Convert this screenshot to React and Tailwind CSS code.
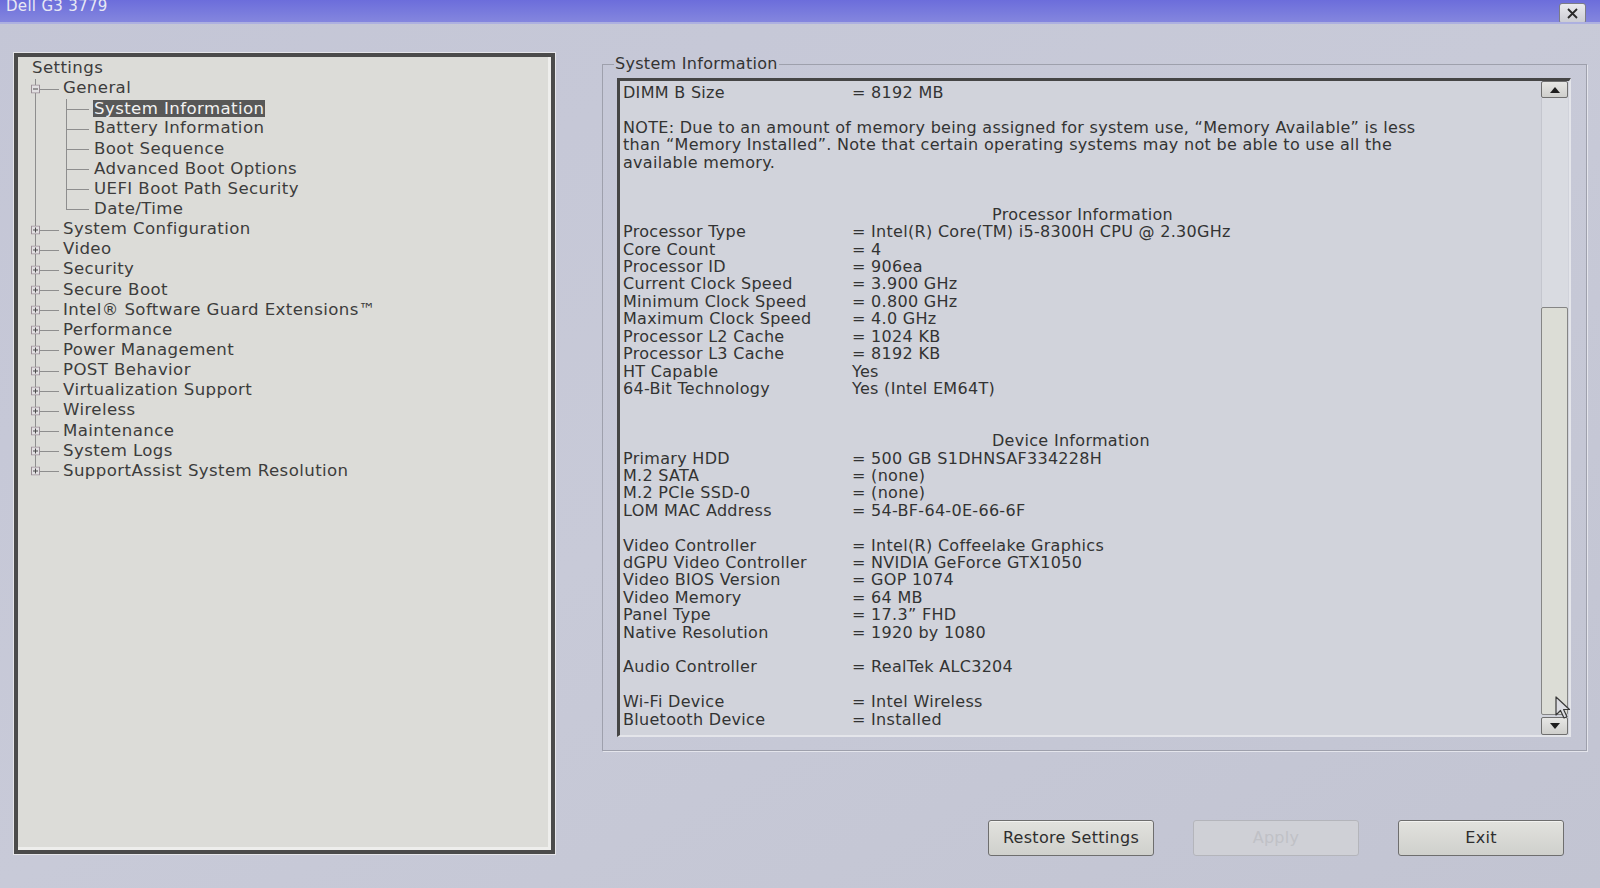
import React from 'react';

const font = "font-['DejaVu_Sans',sans-serif]";

const children = [
  'System Information',
  'Battery Information',
  'Boot Sequence',
  'Advanced Boot Options',
  'UEFI Boot Path Security',
  'Date/Time',
];

const groups = [
  'System Configuration',
  'Video',
  'Security',
  'Secure Boot',
  'Intel® Software Guard Extensions™',
  'Performance',
  'Power Management',
  'POST Behavior',
  'Virtualization Support',
  'Wireless',
  'Maintenance',
  'System Logs',
  'SupportAssist System Resolution',
];

function Box({ open }) {
  return (
    <svg className="absolute left-[13px] top-1/2 -translate-y-1/2" width="9" height="9" viewBox="0 0 9 9">
      <rect x="0.5" y="0.5" width="8" height="8" fill="#e2e0e2" stroke="#9a8e96" />
      <line x1="2" y1="4.5" x2="7" y2="4.5" stroke="#4a4a4a" />
      {!open && <line x1="4.5" y1="2" x2="4.5" y2="7" stroke="#4a4a4a" />}
    </svg>
  );
}

function VLine({ left, half }) {
  return <span className={`absolute ${left} top-0 w-px bg-[#8e8e8e] ${half ? 'h-1/2' : 'h-full'}`} />;
}

function TreeRow({ level, label, open, last, lastChild, selected }) {
  if (level === 0) {
    return <div className="h-[20.5px] flex items-center pl-[14px]">{label}</div>;
  }
  if (level === 1) {
    return (
      <div className="relative h-[20.15px] flex items-center pl-[45px]">
        <VLine left="left-[17px]" half={last} />
        <span className="absolute left-[22px] top-1/2 w-[19px] h-px bg-[#8e8e8e]" />
        <Box open={open} />
        <span>{label}</span>
      </div>
    );
  }
  return (
    <div className="relative h-[20.15px] flex items-center pl-[75px]">
      <VLine left="left-[17px]" />
      <VLine left="left-[48px]" half={lastChild} />
      <span className="absolute left-[48px] top-1/2 w-[23px] h-px bg-[#8e8e8e]" />
      <span className={selected ? 'px-px bg-[#585858] text-[#f2f2f2] leading-[17px]' : 'px-px'}>{label}</span>
    </div>
  );
}

const lines = [
  ['DIMM B Size', '= 8192 MB'],
  null,
  { text: 'NOTE: Due to an amount of memory being assigned for system use, “Memory Available” is less' },
  { text: 'than “Memory Installed”. Note that certain operating systems may not be able to use all the' },
  { text: 'available memory.' },
  null,
  null,
  { head: 'Processor Information' },
  ['Processor Type', '= Intel(R) Core(TM) i5-8300H CPU @ 2.30GHz'],
  ['Core Count', '= 4'],
  ['Processor ID', '= 906ea'],
  ['Current Clock Speed', '= 3.900 GHz'],
  ['Minimum Clock Speed', '= 0.800 GHz'],
  ['Maximum Clock Speed', '= 4.0 GHz'],
  ['Processor L2 Cache', '= 1024 KB'],
  ['Processor L3 Cache', '= 8192 KB'],
  ['HT Capable', 'Yes'],
  ['64-Bit Technology', 'Yes (Intel EM64T)'],
  null,
  null,
  { head: 'Device Information' },
  ['Primary HDD', '= 500 GB S1DHNSAF334228H'],
  ['M.2 SATA', '= (none)'],
  ['M.2 PCIe SSD-0', '= (none)'],
  ['LOM MAC Address', '= 54-BF-64-0E-66-6F'],
  null,
  ['Video Controller', '= Intel(R) Coffeelake Graphics'],
  ['dGPU Video Controller', '= NVIDIA GeForce GTX1050'],
  ['Video BIOS Version', '= GOP 1074'],
  ['Video Memory', '= 64 MB'],
  ['Panel Type', '= 17.3” FHD'],
  ['Native Resolution', '= 1920 by 1080'],
  null,
  ['Audio Controller', '= RealTek ALC3204'],
  null,
  ['Wi-Fi Device', '= Intel Wireless'],
  ['Bluetooth Device', '= Installed'],
];

function InfoLine({ item }) {
  if (!item) return <div className="h-[17.42px]" />;
  if (item.text) return <div className="h-[17.42px] whitespace-nowrap">{item.text}</div>;
  if (item.head) return <div className="h-[17.42px] pl-[369px] whitespace-nowrap">{item.head}</div>;
  return (
    <div className="h-[17.42px] flex whitespace-nowrap">
      <span className="w-[229px] shrink-0">{item[0]}</span>
      <span>{item[1]}</span>
    </div>
  );
}

function Arrow({ up }) {
  return (
    <svg width="10" height="6" viewBox="0 0 10 6">
      <path d={up ? 'M0 6 L5 0 L10 6 Z' : 'M0 0 L5 6 L10 0 Z'} fill="#1e1e1e" />
    </svg>
  );
}

function Button({ children, disabled }) {
  return (
    <div
      className={`w-[166px] h-[36px] flex items-center justify-center rounded-[3px] border ${
        disabled
          ? 'border-[#b4b5bb] bg-[#cfd0d6] text-[#c0c1c6]'
          : 'border-[#6e6e6e] bg-gradient-to-b from-[#e2e2de] to-[#cfd0cc] text-[#2e2e2e] shadow-[inset_0_1px_0_#f2f2f0]'
      }`}
    >
      {children}
    </div>
  );
}

export default function App() {
  return (
    <div className={`relative w-[1600px] h-[888px] overflow-hidden bg-gradient-to-br from-[#c4c6d6] via-[#c8cad8] to-[#c2c4d2] ${font} text-[16px] tracking-[0.3px] text-[#373737]`}>
      {/* title bar */}
      <div className="h-[24px] bg-gradient-to-b from-[#6c6ddb] to-[#8486de] border-b-[2px] border-[#adb0e0] flex items-start justify-between overflow-hidden">
        <div className="ml-[6px] mt-[-4px] text-[#e8e8f4] text-[15px] leading-[20px]">Dell G3 3779</div>
        <div className="mt-[3px] mr-[14px] w-[27px] h-[21px] rounded-[3px] border border-[#7c7c86] bg-gradient-to-b from-[#eaeaee] to-[#cacbd2] flex items-center justify-center">
          <svg width="11" height="11" viewBox="0 0 11 11">
            <path d="M1 1 L10 10 M10 1 L1 10" stroke="#2a2a2a" strokeWidth="1.8" />
          </svg>
        </div>
      </div>

      <div className="flex">
        {/* left tree panel */}
        <div className="ml-[13px] mt-[28px] w-[543px] h-[803px] border border-[#e6e6ea] shrink-0">
          <div className="w-full h-full border-[4px] border-[#4b4b4b]">
            <div className="w-full h-full bg-[#dcdcd8] border-r-[3px] border-b-[3px] border-[#eeeeec] pt-[1px] text-[#3c3c3c] text-[16.6px] tracking-[0.4px]">
              <TreeRow level={0} label="Settings" />
              <TreeRow level={1} label="General" open />
              {children.map((c, i) => (
                <TreeRow key={c} level={2} label={c} selected={i === 0} lastChild={i === children.length - 1} />
              ))}
              {groups.map((g, i) => (
                <TreeRow key={g} level={1} label={g} last={i === groups.length - 1} />
              ))}
            </div>
          </div>
        </div>

        {/* right side */}
        <div className="ml-[46px] mt-[31px] flex flex-col">
          <fieldset className="w-[985px] h-[696px] border border-[#9ea0ac] shadow-[1px_1px_0_#e4e5ec] pl-[14px] pr-[15px]">
            <legend className="ml-[-3px] px-[1px] leading-[18px] text-[#333]">System Information</legend>
            <div className="mt-[5px] h-[659px] flex border-t-[3px] border-l-[3px] border-[#454545] border-r-[2px] border-b-[2px] border-r-[#e4e5ea] border-b-[#e4e5ea] bg-[#d1d3db]">
              <div className="flex-1 overflow-hidden pl-[3px] text-[#333]">
                {lines.map((item, i) => (
                  <InfoLine key={i} item={item} />
                ))}
              </div>
              <div className="w-[27px] mr-px flex flex-col">
                <div className="h-[17px] rounded-[2px] border border-[#6f6f6f] bg-gradient-to-b from-[#e6e6e4] to-[#cfcfcc] flex items-center justify-center">
                  <Arrow up />
                </div>
                <div className="h-[209px] bg-[#d9dbe1] border-l border-[#c4c6ce]" />
                <div className="flex-1 rounded-[2px] border border-[#858585] bg-[#dcddd6]" />
                <div className="mt-[2px] h-[18px] rounded-[2px] border border-[#6f6f6f] bg-gradient-to-b from-[#e6e6e4] to-[#cfcfcc] flex items-center justify-center">
                  <Arrow />
                </div>
              </div>
            </div>
          </fieldset>

          <div className="mt-[69px] pr-[23px] flex justify-end gap-[39px]">
            <Button>Restore Settings</Button>
            <Button disabled>Apply</Button>
            <Button>Exit</Button>
          </div>
        </div>
      </div>

      {/* mouse pointer */}
      <svg className="absolute left-[1555px] top-[696px]" width="20" height="26" viewBox="0 0 20 26">
        <path d="M1 1 L1 19 L5.5 14.5 L9 22 L12 20.7 L8.6 13.5 L14.5 13.5 Z" fill="#dcdde2" stroke="#3a3a3a" strokeWidth="1.2" strokeLinejoin="round" />
      </svg>
    </div>
  );
}
